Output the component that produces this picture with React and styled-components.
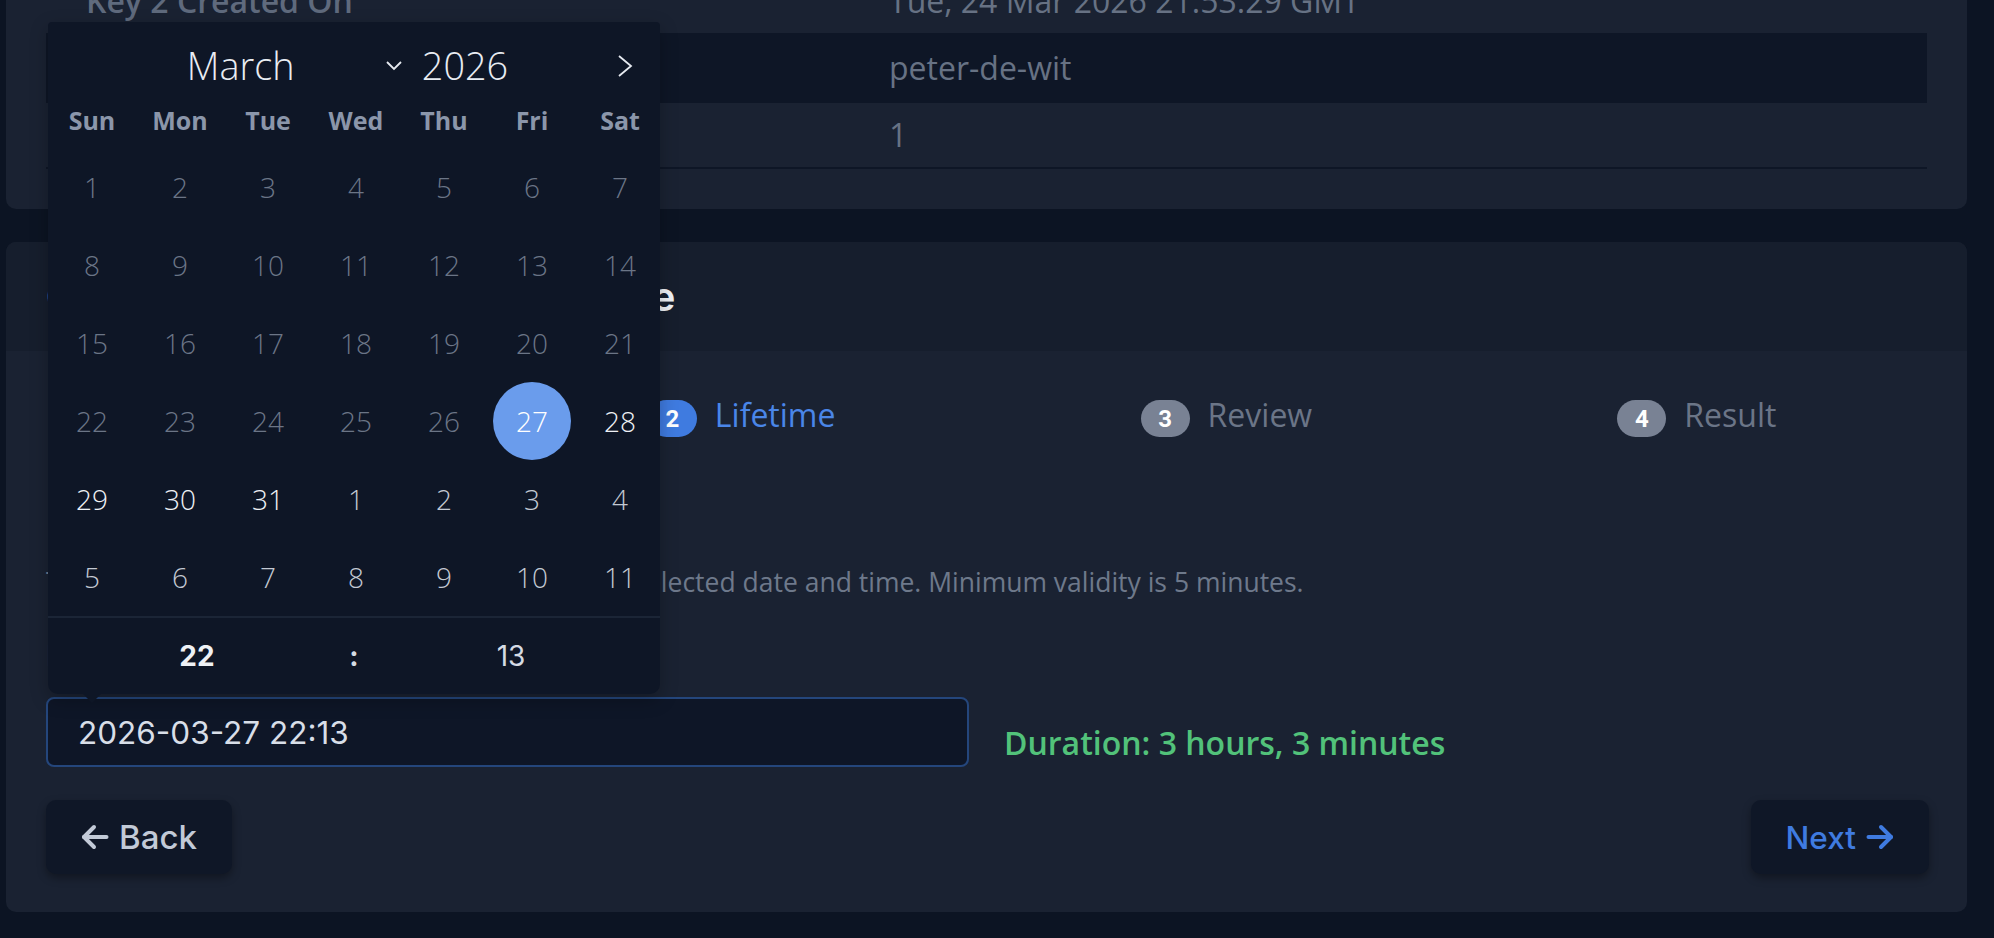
import React from "react";
import styled, { createGlobalStyle } from "styled-components";

const GlobalStyle = createGlobalStyle`
  html, body {
    margin: 0;
    padding: 0;
    background: #0c1423;
    overflow: hidden;
  }
  body {
    font-family: "Open Sans", "Noto Sans", sans-serif;
  }
  * {
    box-sizing: border-box;
  }
`;

const details = [
  { label: "Key 2 Created On", value: "Tue, 24 Mar 2026 21:53:29 GMT" },
  { label: "Username", value: "peter-de-wit" },
  { label: "Key Count", value: "1" },
];

const steps = [
  { n: 1, label: "Basic", state: "done" },
  { n: 2, label: "Lifetime", state: "active" },
  { n: 3, label: "Review", state: "todo" },
  { n: 4, label: "Result", state: "todo" },
];

const weekdays = ["Sun", "Mon", "Tue", "Wed", "Thu", "Fri", "Sat"];

const buildDays = () => {
  const days = [];
  for (let d = 1; d <= 31; d++) {
    let kind = "normal";
    if (d < 27) kind = "disabled";
    if (d === 27) kind = "selected";
    days.push({ key: "m" + d, d, kind });
  }
  for (let d = 1; d <= 11; d++) days.push({ key: "n" + d, d, kind: "next" });
  return days;
};

// thick rounded arrow used on the wizard buttons
const Arrow = ({ dir }) => (
  <svg width="28" height="26" viewBox="0 0 28 26">
    <g
      fill="none"
      stroke="currentColor"
      strokeWidth="4"
      strokeLinecap="round"
      strokeLinejoin="round"
      transform={dir === "left" ? undefined : "matrix(-1 0 0 1 28 0)"}
    >
      <path d="M25.5 13H3" />
      <path d="M13 3L3 13l10 10" />
    </g>
  </svg>
);

const App = () => {
  const days = buildDays();
  return (
    <>
      <GlobalStyle />
      <Page>
        <InfoCard>
          {details.map((row, i) => (
            <InfoRow key={row.label} $striped={i === 1}>
              <InfoLabel>{row.label}</InfoLabel>
              <InfoValue>{row.value}</InfoValue>
            </InfoRow>
          ))}
        </InfoCard>

        <WizardCard>
          <WizardHeader>
            <WizardTitle>Create New API Key for a Profile</WizardTitle>
          </WizardHeader>
          <WizardBody>
            <Stepper>
              {steps.map((s) => (
                <Step key={s.n}>
                  <StepBadge $state={s.state}>{s.n}</StepBadge>
                  <StepLabel $state={s.state}>{s.label}</StepLabel>
                </Step>
              ))}
            </Stepper>

            <SectionTitle>Key lifetime</SectionTitle>
            <Description>
              The new key will stay active and in use until the selected date
              and time. Minimum validity is 5 minutes.
            </Description>

            <FieldLabel>Expires at</FieldLabel>
            <InputRow>
              <PickerAnchor>
                <DateInput readOnly value="2026-03-27 22:13" />
                <Calendar>
                  <CalHeader>
                    <span />
                    <MonthYear>
                      <MonthSelect>
                        March
                        <svg width="18" height="11" viewBox="0 0 18 11">
                          <polyline
                            points="2,2 9,9 16,2"
                            fill="none"
                            stroke="#e6eaf0"
                            strokeWidth="1.8"
                          />
                        </svg>
                      </MonthSelect>
                      <Year>2026</Year>
                    </MonthYear>
                    <NextArrow>
                      <svg width="16" height="24" viewBox="0 0 16 24">
                        <polyline
                          points="2,2 14,12 2,22"
                          fill="none"
                          stroke="#e6eaf0"
                          strokeWidth="1.8"
                        />
                      </svg>
                    </NextArrow>
                  </CalHeader>
                  <Weekdays>
                    {weekdays.map((w) => (
                      <Weekday key={w}>{w}</Weekday>
                    ))}
                  </Weekdays>
                  <DayGrid>
                    {days.map((day) => (
                      <DayCell key={day.key}>
                        <Day $kind={day.kind}>{day.d}</Day>
                      </DayCell>
                    ))}
                  </DayGrid>
                  <TimeRow>
                    <TimePart $bold>22</TimePart>
                    <TimeSep>:</TimeSep>
                    <TimePart>13</TimePart>
                  </TimeRow>
                  <CalArrow />
                </Calendar>
              </PickerAnchor>
              <Duration>Duration: 3 hours, 3 minutes</Duration>
            </InputRow>

            <Actions>
              <NavButton>
                <Arrow dir="left" />
                Back
              </NavButton>
              <NavButton $primary>
                Next
                <Arrow dir="right" />
              </NavButton>
            </Actions>
          </WizardBody>
        </WizardCard>
      </Page>
    </>
  );
};

const Page = styled.div`
  display: flex;
  flex-direction: column;
  gap: 33px;
  margin-top: -71px;
  padding: 0 27px 26px 6px;
`;

const InfoCard = styled.div`
  background: #1a2232;
  border-radius: 10px;
  padding: 40px;
`;

const InfoRow = styled.div`
  display: grid;
  grid-template-columns: 803px 1fr;
  align-items: center;
  height: ${({ $striped }) => ($striped ? "68px" : "66px")};
  border-bottom: 2px solid #0e1626;
  background: ${({ $striped }) => ($striped ? "#0e1626" : "transparent")};
`;

const InfoLabel = styled.div`
  padding-left: 40px;
  font-size: 32px;
  font-weight: 600;
  line-height: 48px;
  color: #5f6a7d;
`;

const InfoValue = styled.div`
  padding-left: 40px;
  font-size: 32px;
  line-height: 48px;
  color: #677284;
`;

const WizardCard = styled.div`
  background: #1a2232;
  border-radius: 10px;
`;

const WizardHeader = styled.div`
  background: #161e2d;
  border-radius: 10px 10px 0 0;
  height: 109px;
  padding: 0 40px;
  display: flex;
  align-items: center;
`;

const WizardTitle = styled.h2`
  margin: 0;
  font-family: Inter, "Open Sans", sans-serif;
  font-size: 40px;
  font-weight: 600;
  letter-spacing: 0.35px;
  color: #eef1f6;
  white-space: nowrap;
`;

const WizardBody = styled.div`
  padding: 40px 38px 38px 40px;
`;

const Stepper = styled.div`
  display: flex;
  justify-content: space-around;
  align-items: center;
  height: 48px;
`;

const Step = styled.div`
  display: flex;
  align-items: center;
  gap: 18px;
`;

const StepBadge = styled.span`
  display: inline-flex;
  align-items: center;
  justify-content: center;
  width: 49px;
  height: 37px;
  margin-top: 7px;
  border-radius: 19px;
  background: ${({ $state }) => ($state === "todo" ? "#798294" : "#3f7be0")};
  color: #ffffff;
  font-family: Roboto, Inter, sans-serif;
  font-size: 24px;
  font-weight: 700;
`;

const StepLabel = styled.span`
  font-size: 32px;
  line-height: 48px;
  color: ${({ $state }) => ($state === "todo" ? "#6b7587" : "#4a86e8")};
`;

const SectionTitle = styled.h3`
  margin: 40px 0 0;
  font-size: 32px;
  line-height: 48px;
  font-weight: 600;
  color: #dfe4ec;
`;

const Description = styled.p`
  margin: 35px 0 0;
  font-size: 26.5px;
  line-height: 40px;
  color: #6e798b;
  white-space: nowrap;
`;

const FieldLabel = styled.div`
  margin-top: 32px;
  font-size: 28px;
  line-height: 42px;
  font-weight: 600;
  color: #c8cfda;
`;

const InputRow = styled.div`
  margin-top: 21px;
  display: flex;
  align-items: flex-end;
  gap: 35px;
`;

const PickerAnchor = styled.div`
  position: relative;
  width: 923px;
`;

const DateInput = styled.input`
  display: block;
  width: 100%;
  height: 70px;
  padding: 0 30px;
  background: #0e1627;
  border: 2px solid #24467c;
  border-radius: 8px;
  outline: none;
  font-family: Inter, "Open Sans", sans-serif;
  font-size: 31.5px;
  color: #d8dee8;
`;

const Duration = styled.div`
  font-size: 32px;
  line-height: 48px;
  font-weight: 600;
  color: #52c27a;
  white-space: nowrap;
`;

const Calendar = styled.div`
  position: absolute;
  left: 2px;
  bottom: calc(100% + 3px);
  width: 612px;
  background: #0e1626;
  border-radius: 4px 4px 10px 10px;
  box-shadow: 0 6px 18px rgba(0, 0, 0, 0.25);
  z-index: 10;
`;

const CalArrow = styled.span`
  position: absolute;
  left: 35px;
  bottom: -9px;
  width: 0;
  height: 0;
  border-left: 9px solid transparent;
  border-right: 9px solid transparent;
  border-top: 9px solid #0e1626;
`;

const CalHeader = styled.div`
  display: grid;
  grid-template-columns: 1fr auto 1fr;
  align-items: center;
  height: 70px;
  padding-top: 18px;
`;

const MonthYear = styled.div`
  display: flex;
  align-items: center;
  gap: 19px;
  padding-right: 13px;
  font-size: 37.8px;
  font-weight: 300;
  color: #e8ecf2;
  line-height: 1;
`;

const MonthSelect = styled.div`
  width: 216px;
  display: flex;
  align-items: center;
  justify-content: space-between;
`;

const Year = styled.span``;

const NextArrow = styled.span`
  justify-self: end;
  padding-right: 27px;
  display: flex;
`;

const Weekdays = styled.div`
  display: grid;
  grid-template-columns: repeat(7, 1fr);
  align-items: center;
  width: 616px;
  height: 56px;
`;

const Weekday = styled.span`
  text-align: center;
  font-size: 25px;
  font-weight: 700;
  color: #8b96aa;
`;

const DayGrid = styled.div`
  display: grid;
  grid-template-columns: repeat(7, 1fr);
  grid-auto-rows: 78px;
  width: 616px;
`;

const DayCell = styled.div`
  display: flex;
  align-items: center;
  justify-content: center;
`;

const dayColors = {
  disabled: "#6b7586",
  normal: "#eef1f5",
  next: "#c3c9d3",
  selected: "#ffffff",
};

const Day = styled.span`
  width: 78px;
  height: 78px;
  border-radius: 50%;
  display: flex;
  align-items: center;
  justify-content: center;
  font-size: 28px;
  font-weight: 300;
  color: ${({ $kind }) => dayColors[$kind]};
  background: ${({ $kind }) => ($kind === "selected" ? "#6a9cec" : "transparent")};
`;

const TimeRow = styled.div`
  display: flex;
  align-items: center;
  height: 78px;
  border-top: 2px solid #1b2536;
  font-family: Inter, "Open Sans", sans-serif;
  font-size: 28px;
`;

const TimePart = styled.span`
  flex: 1;
  text-align: center;
  font-weight: ${({ $bold }) => ($bold ? 700 : 400)};
  color: ${({ $bold }) => ($bold ? "#eef1f5" : "#d5dbe4")};
`;

const TimeSep = styled.span`
  width: 16px;
  text-align: center;
  font-weight: 700;
  color: #d5dbe4;
`;

const Actions = styled.div`
  margin-top: 33px;
  display: flex;
  justify-content: space-between;
`;

const NavButton = styled.button`
  display: inline-flex;
  align-items: center;
  gap: 10px;
  height: 74px;
  padding: 0 35px;
  border: none;
  border-radius: 10px;
  background: #0f1727;
  box-shadow: 0 4px 8px rgba(0, 0, 0, 0.35);
  font-family: Inter, "Open Sans", sans-serif;
  font-size: ${({ $primary }) => ($primary ? "31.5px" : "33px")};
  font-weight: 500;
  color: ${({ $primary }) => ($primary ? "#3f7be0" : "#c2cad7")};
  cursor: pointer;
`;

export default App;
